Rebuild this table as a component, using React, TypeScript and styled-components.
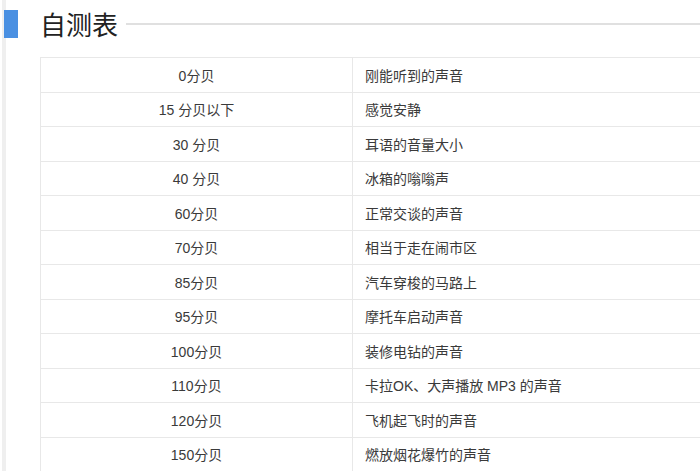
import styled, { createGlobalStyle } from 'styled-components'

const GlobalStyle = createGlobalStyle`
  html, body {
    margin: 0;
    padding: 0;
    background: #fff;
    overflow: hidden;
  }
  body {
    font-family: "Liberation Sans", "Noto Sans CJK SC", sans-serif;
  }
`

const Page = styled.main`
  width: 700px;
  height: 471px;
  overflow: hidden;
  background: linear-gradient(to right, #fff 0, #fff 2px, #efefef 2px, #efefef 6px, #fff 6px);
  padding-top: 10px;
  padding-left: 4px;
  box-sizing: border-box;
`

const Heading = styled.header`
  display: flex;
  align-items: center;
  height: 28px;
`

const Marker = styled.span`
  width: 14px;
  height: 28px;
  background: #4a90e2;
  margin-right: 22px;
  flex: none;
`

const Title = styled.h2`
  margin: 0;
  font-family: "Noto Sans CJK SC", sans-serif;
  font-size: 26px;
  font-weight: normal;
  color: #222;
  line-height: 28px;
  white-space: nowrap;
`

const Rule = styled.span`
  flex: 1;
  height: 2px;
  background: #e0e0e0;
  margin-left: 8px;
`

const Table = styled.table`
  margin: 19px 0 0 36px;
  width: 700px;
  border-collapse: collapse;
  font-size: 14px;
  color: #3a3a3a;
`

const Cell = styled.td<{ $center?: boolean }>`
  height: 34.5px;
  padding: 0 12px;
  box-sizing: border-box;
  border: 1px solid #e8e8e8;
  text-align: ${(p) => (p.$center ? 'center' : 'left')};
  vertical-align: middle;
  white-space: nowrap;
`

const rows: [string, string][] = [
  ['0分贝', '刚能听到的声音'],
  ['15 分贝以下', '感觉安静'],
  ['30 分贝', '耳语的音量大小'],
  ['40 分贝', '冰箱的嗡嗡声'],
  ['60分贝', '正常交谈的声音'],
  ['70分贝', '相当于走在闹市区'],
  ['85分贝', '汽车穿梭的马路上'],
  ['95分贝', '摩托车启动声音'],
  ['100分贝', '装修电钻的声音'],
  ['110分贝', '卡拉OK、大声播放 MP3 的声音'],
  ['120分贝', '飞机起飞时的声音'],
  ['150分贝', '燃放烟花爆竹的声音'],
]

const App = () => {
  return (
    <>
      <GlobalStyle />
      <Page>
        <Heading>
          <Marker />
          <Title>自测表</Title>
          <Rule />
        </Heading>
        <Table>
          <colgroup>
            <col style={{ width: 312 }} />
            <col />
          </colgroup>
          <tbody>
            {rows.map(([level, desc]) => (
              <tr key={level}>
                <Cell $center>{level}</Cell>
                <Cell>{desc}</Cell>
              </tr>
            ))}
          </tbody>
        </Table>
      </Page>
    </>
  )
}

export default App
